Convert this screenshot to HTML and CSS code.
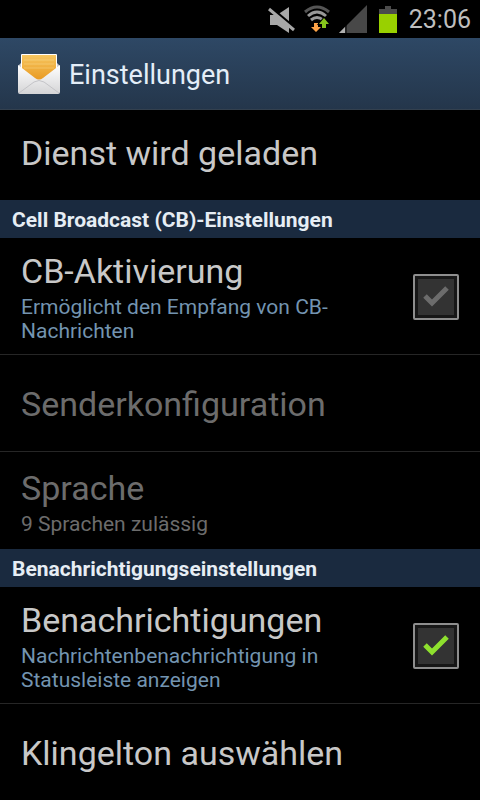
FILE: index.html
```
<!DOCTYPE html>
<html lang="de">
<head>
    <meta charset="UTF-8">
    <meta name="viewport" content="width=device-width, initial-scale=1.0">
    <title>Einstellungen</title>
    <link rel="stylesheet" href="styles.css">
</head>
<body>
    <div class="status-bar">
        <svg class="status-icon" width="28" height="28" viewBox="0 0 28 28" aria-hidden="true">
            <path d="M3 10h7l12-8v26l-12-8H3z" fill="#a8a8a8"/>
            <path d="M1 1l27 23" stroke="#000" stroke-width="4"/>
            <path d="M2 4l25 21" stroke="#a8a8a8" stroke-width="3"/>
        </svg>
        <svg class="status-icon wifi" width="28" height="28" viewBox="0 0 28 28" aria-hidden="true">
            <g fill="none" stroke-width="3">
                <path d="M2 7q12-10 24 0" stroke="#555"/>
                <path d="M5 11q9-8 18 0" stroke="#999"/>
                <path d="M8 15q6-5 12 0" stroke="#999"/>
            </g>
            <path d="M11 18h4v4h3l-5 5-5-5h3z" fill="#ffa347" stroke="#000" stroke-width="2" paint-order="stroke"/>
            <path d="M19 23v-4h-3l5-6 5 6h-3v4z" fill="#86c41c" stroke="#000" stroke-width="2" paint-order="stroke"/>
        </svg>
        <svg class="status-icon" width="28" height="28" viewBox="0 0 28 28" aria-hidden="true">
            <path d="M0 28L28 0v28z" fill="#484848"/>
            <path d="M0 28l6-6v6z" fill="#b0b0b0"/>
            <path d="M7 20v8" stroke="#000"/>
        </svg>
        <svg class="status-icon" width="18" height="28" viewBox="0 0 18 28" aria-hidden="true">
            <path d="M6 1h6v3h6v5H0V4h6z" fill="#4b4b4b"/>
            <path d="M0 9h18v19H0z" fill="#99d000"/>
        </svg>
        <time class="clock">23:06</time>
    </div>

    <header class="title-bar">
        <svg class="app-icon" width="44" height="42" viewBox="0 0 44 42" aria-hidden="true">
            <defs>
                <linearGradient id="paper" x1="0" y1="0" x2="0" y2="1">
                    <stop offset="0" stop-color="#f6c660"/>
                    <stop offset="1" stop-color="#e8961c"/>
                </linearGradient>
                <linearGradient id="envelope" x1="0" y1="0" x2="0" y2="1">
                    <stop offset="0" stop-color="#fff"/>
                    <stop offset="1" stop-color="#d4d4d6"/>
                </linearGradient>
            </defs>
            <path d="M1 13l3-3h36l3 3v25H1z" fill="#c9cbd0"/>
            <rect x="4" y="1" width="36" height="32" rx="1" fill="#fff"/>
            <path d="M5 2h34v27H5z" fill="url(#paper)"/>
            <path d="M7 7h30M7 11h30M7 15h30" stroke="#fff0b8" stroke-opacity="0.3"/>
            <path d="M1 12l17 13q4 3 8 0l17-13v27q0 2-2 2H3q-2 0-2-2z" fill="url(#envelope)"/>
            <path d="M2 40l15-11q5-3 10 0l15 11" fill="none" stroke="#c4c4c8"/>
        </svg>
        <h1 class="page-title">Einstellungen</h1>
    </header>

    <main>
        <button class="row row-first" type="button">
            <span class="row-title">Dienst wird geladen</span>
        </button>

        <h2 class="section">Cell Broadcast (CB)-Einstellungen</h2>
        <label class="row divider">
            <span class="row-text">
                <span class="row-title">CB-Aktivierung</span>
                <span class="row-summary">Ermöglicht den Empfang von CB-Nachrichten</span>
            </span>
            <input class="check" type="checkbox">
            <span class="box">
                <svg width="28" height="24" viewBox="0 0 28 24" aria-hidden="true"><path d="M3 11l7 7L25 3" /></svg>
            </span>
        </label>
        <button class="row divider" type="button" disabled>
            <span class="row-title">Senderkonfiguration</span>
        </button>
        <button class="row" type="button" disabled>
            <span class="row-text">
                <span class="row-title">Sprache</span>
                <span class="row-summary">9 Sprachen zulässig</span>
            </span>
        </button>

        <h2 class="section">Benachrichtigungseinstellungen</h2>
        <label class="row divider">
            <span class="row-text">
                <span class="row-title">Benachrichtigungen</span>
                <span class="row-summary">Nachrichtenbenachrichtigung in Statusleiste anzeigen</span>
            </span>
            <input class="check" type="checkbox" checked>
            <span class="box">
                <svg width="28" height="24" viewBox="0 0 28 24" aria-hidden="true"><path d="M3 11l7 7L25 3" /></svg>
            </span>
        </label>
        <button class="row row-last" type="button">
            <span class="row-title">Klingelton auswählen</span>
        </button>
    </main>
</body>
</html>
```
FILE: styles.css
```
* {
    margin: 0;
    padding: 0;
    box-sizing: border-box;
    font-family: Roboto, sans-serif;
}

body {
    background: #000;
    color: #c8c8c8;
}

.status-bar {
    display: flex;
    justify-content: flex-end;
    align-items: center;
    gap: 12px;
    height: 38px;
    padding-right: 9px;
}

.status-icon {
    flex: none;
}

.wifi {
    margin: 0 -4px;
}

.clock {
    padding-top: 2px;
    font-size: 25px;
    line-height: 36px;
    color: #bebebe;
}

.title-bar {
    display: flex;
    align-items: center;
    gap: 8px;
    height: 72px;
    padding: 0 17px;
    background: linear-gradient(#2e4865, #24364b);
    border-bottom: 1px solid #33404e;
}

.page-title {
    padding-top: 2px;
    font-size: 27px;
    font-weight: 400;
    color: #e4eef8;
}

.row {
    display: flex;
    align-items: center;
    gap: 16px;
    width: 100%;
    min-height: 97px;
    padding: 13px 21px 11px;
    border: none;
    background: #000;
    color: #c8c8c8;
    text-align: left;
    cursor: pointer;
}

.row-first {
    min-height: 90px;
    padding-bottom: 18px;
}

.row-last {
    min-height: 96px;
}

.divider {
    border-bottom: 1px solid #262626;
}

.row-text {
    display: flex;
    flex: 1;
    flex-direction: column;
    gap: 4px;
}

.row-title {
    font-size: 34px;
    line-height: 40px;
}

.row-summary {
    font-size: 21px;
    line-height: 24px;
    color: #7394b0;
}

.row:disabled,
.row:disabled .row-summary {
    color: #6c6c6c;
    cursor: default;
}

.section {
    padding: 2px 12px 0;
    font-size: 21px;
    line-height: 36px;
    color: #e6edf4;
    background: #1a2a3f;
}

.check {
    appearance: none;
    width: 0;
    height: 0;
    margin-left: -16px;
}

.box {
    display: flex;
    flex: none;
    justify-content: center;
    align-items: center;
    width: 46px;
    height: 46px;
    border: 2px solid #8e8e8e;
    border-radius: 2px;
    background: #333;
    box-shadow: inset 0 0 0 3px #171717;
}

.box path {
    fill: none;
    stroke: #6c6c6c;
    stroke-width: 5;
}

.check:checked + .box path {
    stroke: #8ee02e;
}

.check:focus-visible + .box {
    border-color: #7394b0;
}
```
